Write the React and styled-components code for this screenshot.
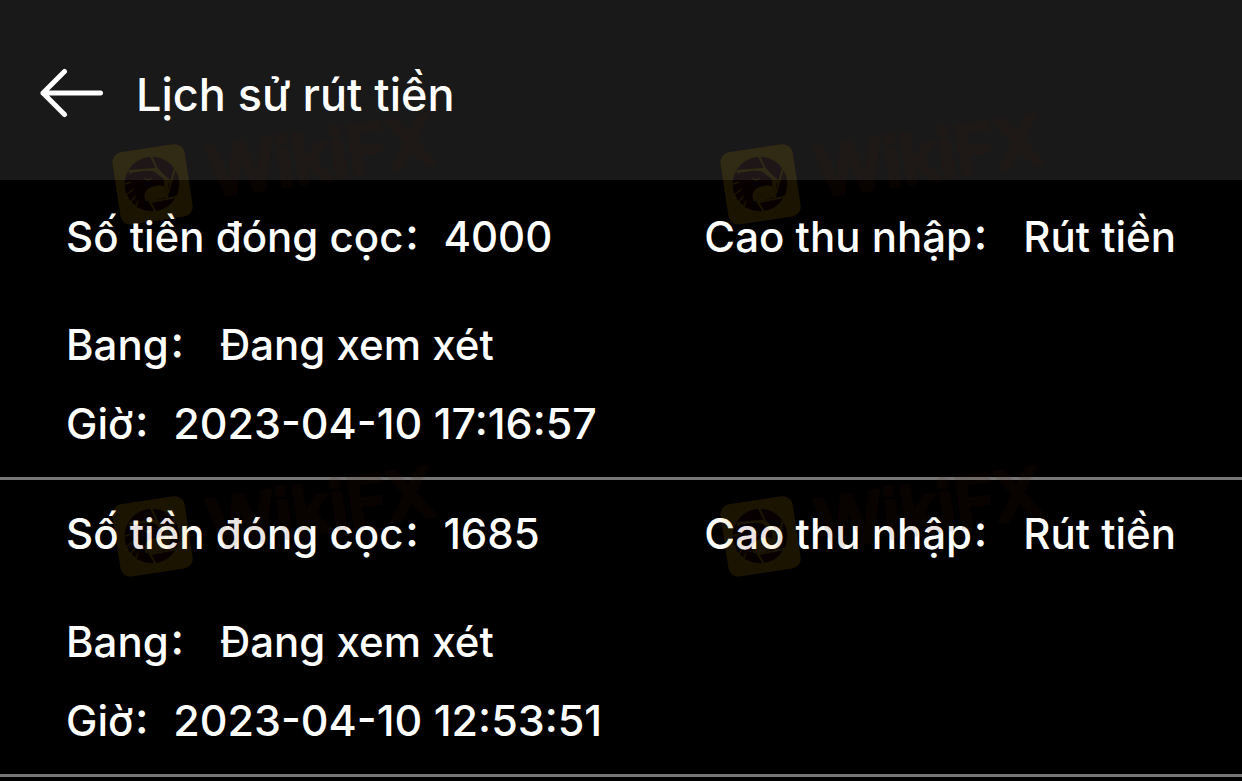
import React from "react";
import styled, { createGlobalStyle } from "styled-components";

const GlobalStyle = createGlobalStyle`
  *, *::before, *::after { box-sizing: border-box; }
  body {
    margin: 0;
    background: #000;
    color: #fff;
    font-family: Inter, "Noto Sans CJK SC", sans-serif;
    font-weight: 500;
  }
`;

const Page = styled.div`
  position: relative;
  min-height: 100vh;
  overflow: hidden;
`;

const Header = styled.header`
  display: flex;
  align-items: center;
  gap: 32px;
  padding: 63px 40px 57px;
  background: #191919;
`;

const BackButton = styled.button`
  display: flex;
  padding: 0;
  border: 0;
  background: none;
  color: inherit;
  cursor: pointer;
`;

const Title = styled.h1`
  margin: 0;
  padding-top: 4px;
  font-size: 45px;
  line-height: 56px;
  font-weight: 500;
`;

const RecordList = styled.ul`
  margin: 0;
  padding: 3px 0 0;
  list-style: none;
`;

const Record = styled.li`
  padding: 15px 66px;
  border-bottom: 3px solid #767676;
  font-size: 42px;
  line-height: 78px;
`;

const Row = styled.div`
  display: flex;
  justify-content: space-between;
  margin-bottom: ${(p) => (p.$spaced ? "30px" : "0")};
`;

const Field = styled.span`
  height: 78px;
  white-space: pre;
`;

const Colon = styled.span`
  display: inline-block;
  width: 40px;
  font-size: 34px;
  font-weight: 700;
  line-height: 1;
  vertical-align: 3px;
`;

const Time = styled.time`
  font-size: 43px;
`;

const WatermarkLayer = styled.div`
  position: absolute;
  inset: 0;
  display: grid;
  grid-template-columns: repeat(auto-fill, 608px);
  grid-auto-rows: 352px;
  padding-top: 96px;
  pointer-events: none;
`;

const Mark = styled.svg`
  display: block;
  overflow: visible;
  opacity: 0.11;
`;

const MarkText = styled.text`
  font-family: Inter, sans-serif;
  font-size: 68px;
  font-weight: 500;
  fill: #491b00;
  stroke: #491b00;
  stroke-width: 4px;
  stroke-linejoin: round;
`;

function Watermark() {
  return (
    <Mark width="608" height="352" viewBox="0 0 608 352" aria-hidden="true">
      <g transform="translate(152 88) rotate(-8.6)">
        <rect x="-36" y="-36" width="73" height="73" rx="10" fill="#f5b800" />
        <MarkText x="57" y="22">WikiFX</MarkText>
      </g>
      <g transform="translate(152 88) scale(0.3333) translate(-180 -252)">
        <circle cx="180" cy="252" r="82" fill="#46000f" />
        <path d="M196 208L231 243L224 290L176 306L150 300L108 250L112 212Z" fill="#f5b800" />
        <path
          d="M110 213L196 206M177 168L196 208L234 245M252 194L223 296M264 289L174 307L192 336"
          fill="none"
          stroke="#f5b800"
          strokeWidth="6"
        />
        <path
          d="M100 233Q112 215 138 216Q168 209 188 215Q202 228 216 236L217 260Q206 252 190 258Q164 262 158 283Q157 301 165 314L158 330Q143 324 138 305L132 318Q123 309 126 290L113 302Q108 292 117 277L102 281Q98 257 100 233Z"
          fill="#46000f"
        />
        <path d="M154 231L166 238L181 233Q176 242 164 243Z" fill="#f5b800" />
        <path
          d="M99 252L116 246M103 284L124 268M116 306L130 288M130 322L138 302"
          stroke="#f5b800"
          strokeWidth="4"
        />
      </g>
    </Mark>
  );
}

function BackArrow() {
  return (
    <svg width="64" height="50" viewBox="0 0 64 50" fill="none" stroke="currentColor" strokeWidth="5" strokeLinecap="round" strokeLinejoin="round" aria-hidden="true">
      <path d="M24.5 3.5L3 25L24.5 46.5M3 25H60.5" />
    </svg>
  );
}

const records = [
  { amount: "4000", type: "Rút tiền", status: "Đang xem xét", time: "2023-04-10 17:16:57" },
  { amount: "1685", type: "Rút tiền", status: "Đang xem xét", time: "2023-04-10 12:53:51" },
];

export default function App() {
  return (
    <Page>
      <GlobalStyle />
      <Header>
        <BackButton type="button" aria-label="Quay lại">
          <BackArrow />
        </BackButton>
        <Title>Lịch sử rút tiền</Title>
      </Header>
      <main>
        <RecordList>
          {records.map((r) => (
            <Record key={r.time}>
              <Row $spaced>
                <Field>Số tiền đóng cọc<Colon>：</Colon>{r.amount}</Field>
                <Field>Cao thu nhập<Colon>：</Colon> {r.type}</Field>
              </Row>
              <Row>
                <Field>Bang<Colon>：</Colon> {r.status}</Field>
              </Row>
              <Row>
                <Field>Giờ<Colon>：</Colon><Time>{r.time}</Time></Field>
              </Row>
            </Record>
          ))}
        </RecordList>
      </main>
      <WatermarkLayer>
        {[0, 1, 2, 3].map((n) => (
          <Watermark key={n} />
        ))}
      </WatermarkLayer>
    </Page>
  );
}
